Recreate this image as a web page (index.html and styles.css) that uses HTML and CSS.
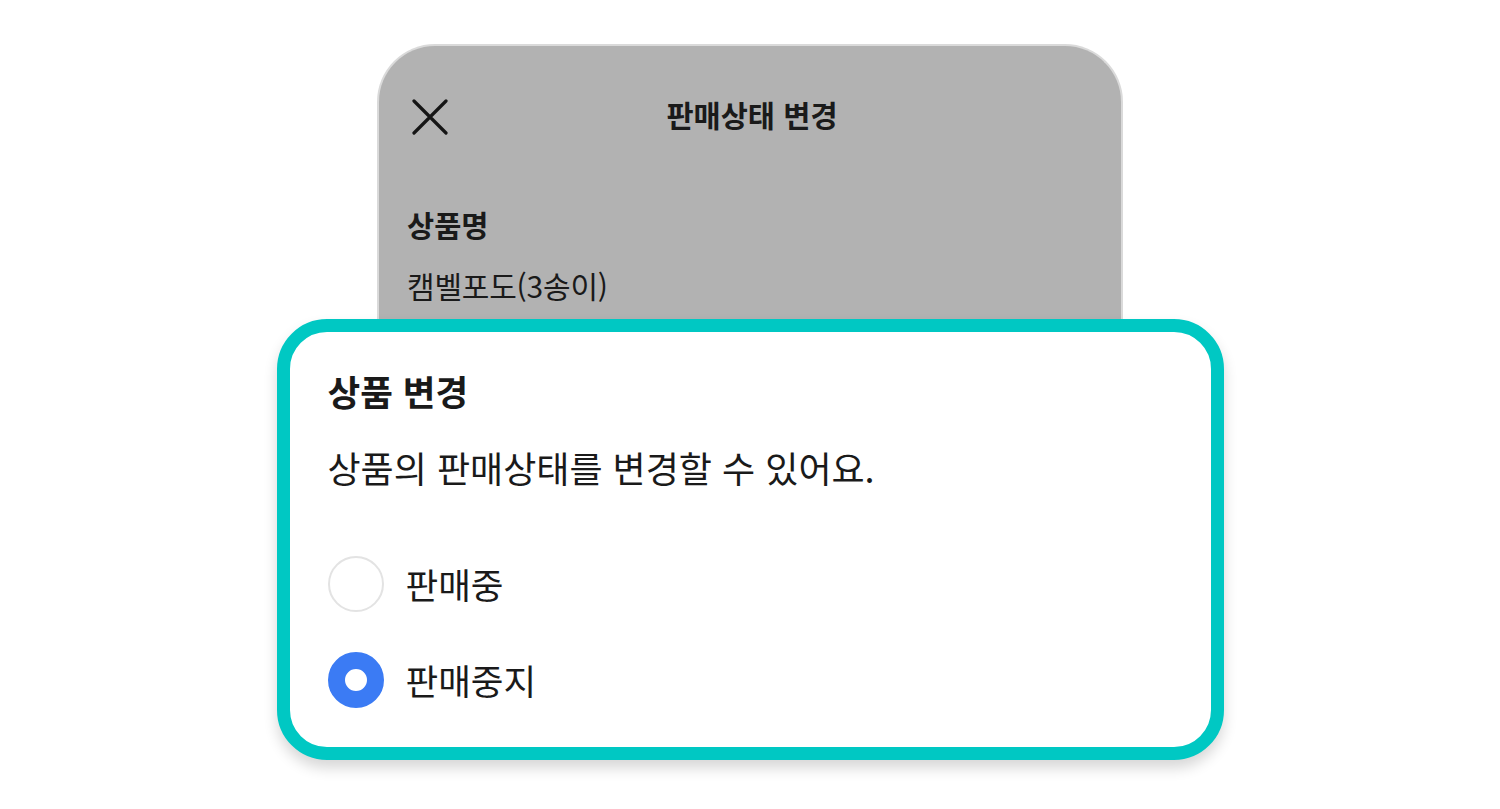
FILE: index.html
```html
<!DOCTYPE html>
<html lang="ko">
<head>
<meta charset="utf-8">
<link rel="stylesheet" href="styles.css">
</head>
<body>
<div class="stage">
  <div class="sheet">
    <div class="sheet-header">
      <svg class="close" viewBox="0 0 36 36" width="36" height="36">
        <path d="M2 2 L34 34 M34 2 L2 34" stroke="#151515" stroke-width="3.2" stroke-linecap="round" fill="none"/>
      </svg>
      <div class="sheet-title">판매상태 변경</div>
    </div>
    <div class="field-label">상품명</div>
    <div class="field-value">캠벨포도(3송이)</div>
  </div>
  <div class="dialog">
    <div class="dialog-title">상품 변경</div>
    <div class="dialog-desc">상품의 판매상태를 변경할 수 있어요.</div>
    <div class="options">
      <div class="option">
        <span class="radio"></span>
        <span class="option-label">판매중</span>
      </div>
      <div class="option">
        <span class="radio checked"></span>
        <span class="option-label">판매중지</span>
      </div>
    </div>
  </div>
</div>
</body>
</html>
```

FILE: styles.css
```css
html, body {
  margin: 0;
  padding: 0;
  background: #ffffff;
}
body {
  font-family: "Noto Sans CJK KR", "Noto Sans", sans-serif;
  color: #1a1a1a;
  width: 1500px;
  height: 809px;
  overflow: hidden;
}
.stage {
  padding-top: 44px;
}
.sheet {
  box-sizing: border-box;
  width: 746px;
  height: 300px;
  margin: 0 auto;
  background: #b2b2b2;
  border: 2px solid #dadada;
  border-bottom: none;
  border-radius: 58px 58px 0 0;
  padding: 0 28px;
}
.sheet-header {
  position: relative;
  height: 142px;
  display: flex;
  align-items: center;
  justify-content: center;
  margin-top: -3px;
  padding-left: 4px;
}
.close {
  position: absolute;
  left: 5px;
  top: 56px;
}
.sheet-title {
  font-size: 29.5px;
  font-weight: 700;
  line-height: 40px;
}
.field-label {
  font-size: 29.5px;
  font-weight: 700;
  margin-top: 22px;
  line-height: 34px;
}
.field-value {
  font-size: 30px;
  margin-top: 26px;
  line-height: 36px;
  letter-spacing: -0.2px;
}
.dialog {
  position: relative;
  box-sizing: border-box;
  width: 947px;
  height: 441px;
  margin: -25px auto 0;
  background: #ffffff;
  border: 13px solid #00c8c3;
  border-radius: 50px;
  box-shadow: 0 8px 14px rgba(0, 0, 0, 0.16);
  padding: 38px 38px 0;
}
.dialog-title {
  font-size: 35.5px;
  font-weight: 700;
  line-height: 42px;
}
.dialog-desc {
  font-size: 36px;
  line-height: 42px;
  margin-top: 34px;
}
.options {
  margin-top: 68px;
  display: flex;
  flex-direction: column;
  gap: 40px;
}
.option {
  display: flex;
  align-items: center;
  gap: 22px;
  height: 56px;
}
.radio {
  box-sizing: border-box;
  width: 56px;
  height: 56px;
  border-radius: 50%;
  border: 2px solid #e3e3e3;
  background: #ffffff;
  flex: none;
}
.radio.checked {
  border: 17px solid #3b7bf4;
}
.option-label {
  font-size: 35.5px;
  line-height: 42px;
}
```
